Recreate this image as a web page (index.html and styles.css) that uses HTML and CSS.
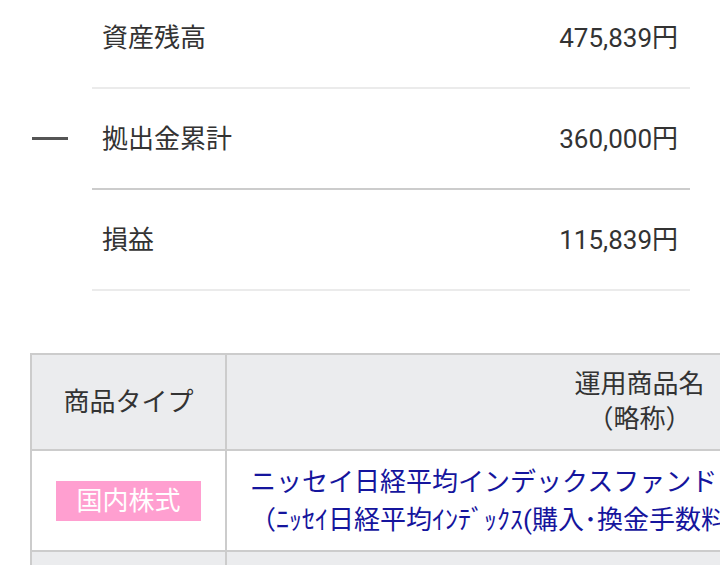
FILE: index.html
```html
<!DOCTYPE html>
<html lang="ja">
<head>
    <meta charset="UTF-8">
    <meta name="viewport" content="width=device-width, initial-scale=1.0">
    <title>資産状況</title>
    <link rel="stylesheet" href="styles.css">
</head>
<body>
    <!-- Balance summary -->
    <div class="summary">
        <div class="summary-row">
            <div class="sign"></div>
            <div class="summary-body">
                <span class="label">資産残高</span>
                <span class="value">475,839円</span>
            </div>
        </div>
        <div class="summary-row">
            <div class="sign"><span class="minus"></span></div>
            <div class="summary-body total">
                <span class="label">拠出金累計</span>
                <span class="value">360,000円</span>
            </div>
        </div>
        <div class="summary-row">
            <div class="sign"></div>
            <div class="summary-body">
                <span class="label">損益</span>
                <span class="value">115,839円</span>
            </div>
        </div>
    </div>

    <!-- Product table -->
    <div class="table-wrap">
        <table class="products">
            <colgroup>
                <col class="col-type">
                <col class="col-name">
            </colgroup>
            <thead>
                <tr>
                    <th>商品タイプ</th>
                    <th>運用商品名<br>（略称）</th>
                </tr>
            </thead>
            <tbody>
                <tr class="product-row">
                    <td class="type-cell"><span class="badge">国内株式</span></td>
                    <td class="name-cell">
                        <a href="#" class="fund-link">ニッセイ日経平均インデックスファンド<br>（ﾆｯｾｲ日経平均ｲﾝﾃﾞｯｸｽ(購入･換金手数料なし)）</a>
                    </td>
                </tr>
                <tr class="blank-row">
                    <td></td>
                    <td></td>
                </tr>
            </tbody>
        </table>
    </div>
</body>
</html>
```
FILE: styles.css
```css
/* Base */
* {
    margin: 0;
    padding: 0;
    box-sizing: border-box;
}

body {
    font-family: Roboto, "Noto Sans CJK JP", sans-serif;
    font-size: 26px;
    color: #333;
    background: #fff;
    overflow: hidden;
}

/* Summary rows */
.summary {
    margin-top: -12px;
    margin-right: 30px;
}

.summary-row {
    display: flex;
}

.sign {
    width: 92px;
    flex-shrink: 0;
    display: flex;
    align-items: center;
}

.minus {
    display: block;
    width: 36px;
    height: 3px;
    margin: -2px 0 0 32px;
    background: #555;
}

.summary-body {
    flex: 1;
    height: 101px;
    display: flex;
    align-items: center;
    justify-content: space-between;
    padding: 0 12px 4px 10px;
    border-bottom: 2px solid #ebebeb;
}

.summary-body.total {
    border-bottom-color: #cccccc;
}

/* Product table */
.table-wrap {
    margin-top: 62px;
    padding-left: 30px;
    overflow: hidden;
}

.products {
    border-collapse: collapse;
    table-layout: fixed;
    width: 1022px;
}

.col-type {
    width: 195px;
}

.col-name {
    width: 827px;
}

.products th,
.products td {
    border: 2px solid #cccccc;
}

.products th {
    background: #ebecee;
    font-weight: normal;
    height: 96px;
    line-height: 35px;
    text-align: center;
}

.product-row td {
    height: 101px;
}

.type-cell {
    text-align: center;
}

.badge {
    display: inline-block;
    height: 40px;
    line-height: 40px;
    padding: 0 20px;
    background: #ff9fd0;
    color: #fff;
    vertical-align: middle;
}

.name-cell {
    padding-left: 23px;
    white-space: nowrap;
    line-height: 38px;
}

.fund-link {
    color: #15159d;
    text-decoration: none;
}

.blank-row td {
    background: #ebecee;
    height: 60px;
}
```
